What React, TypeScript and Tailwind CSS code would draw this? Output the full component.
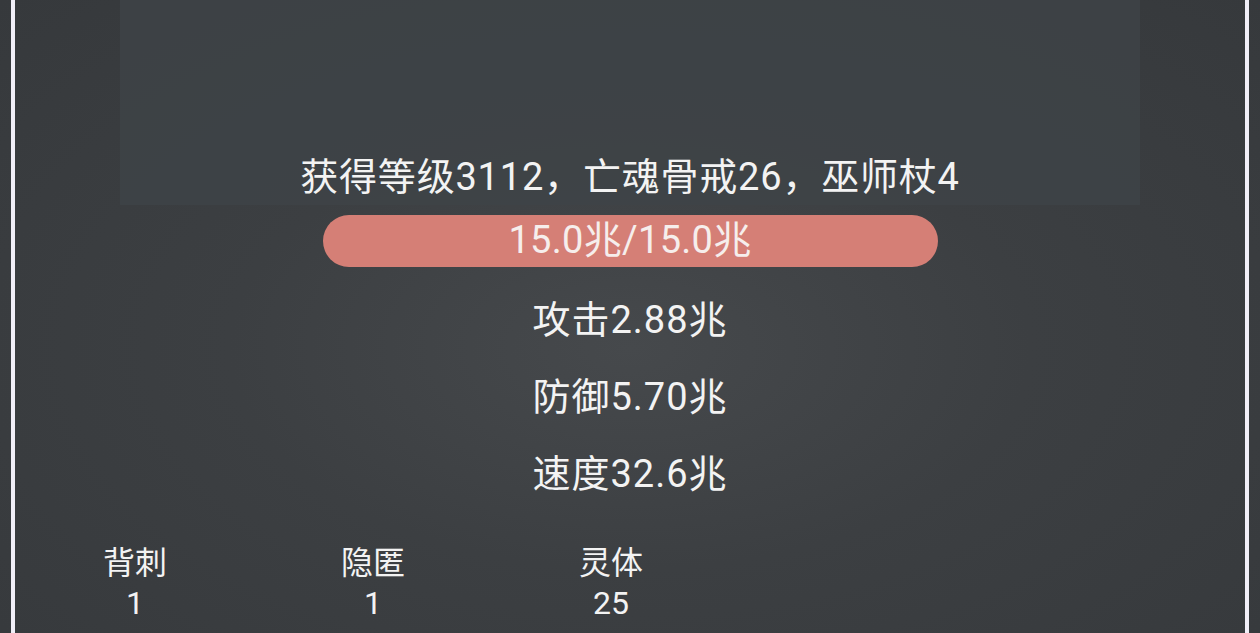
const STATS = ['攻击2.88兆', '防御5.70兆', '速度32.6兆'];

const SKILLS = [
  { name: '背刺', value: 1 },
  { name: '隐匿', value: 1 },
  { name: '灵体', value: 25 },
];

export default function App() {
  return (
    <div
      className="h-[633px] w-full overflow-hidden bg-[radial-gradient(ellipse_at_50%_55%,#46494c_0%,#3c3f42_45%,#36393c_100%)] text-[#f3f3f3]"
      style={{ fontFamily: 'Roboto, "Noto Sans CJK SC", "Noto Sans", sans-serif' }}
    >
      <div className="mx-[11px] h-full border-x-4 border-[#f1eff8]">
        {/* Top panel */}
        <div className="mx-[105px] flex h-[205px] items-end justify-center bg-[#3f4347]/80 pb-[5px]">
          <p className="text-[38px] leading-[46px] tracking-[0.8px]">获得等级3112，亡魂骨戒26，巫师杖4</p>
        </div>

        {/* HP pill */}
        <div className="mt-[10px] flex justify-center">
          <div className="flex h-[52px] w-[615px] items-center justify-center rounded-full bg-[#d57f76] pb-[3px] text-[38px] leading-none tracking-[0.3px] text-[#f6eeec]">
            15.0兆/15.0兆
          </div>
        </div>

        {/* Stats */}
        <div className="mt-[15px] flex flex-col items-center">
          {STATS.map((s) => (
            <p key={s} className="text-[38px] leading-[77px] tracking-[1px]">{s}</p>
          ))}
        </div>

        {/* Skills */}
        <div className="mt-[33px] flex pl-px">
          {SKILLS.map((k) => (
            <div key={k.name} className="flex w-[238px] flex-col items-center gap-[6px] text-[32px] leading-[34px]">
              <span>{k.name}</span>
              <span>{k.value}</span>
            </div>
          ))}
        </div>
      </div>
    </div>
  );
}
